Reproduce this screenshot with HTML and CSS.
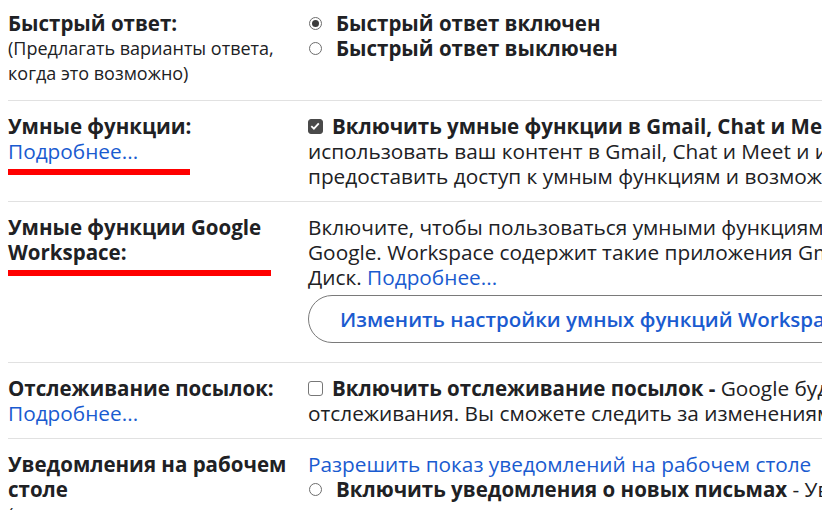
FILE: index.html
```html
<!DOCTYPE html>
<html lang="ru">
<head>
<meta charset="utf-8">
<link rel="stylesheet" href="styles.css">
</head>
<body>
<div class="settings">
  <div class="row row-first">
    <div class="label">
      <div class="title">Быстрый ответ:</div>
      <div class="sub">(Предлагать варианты ответа,<br>когда это возможно)</div>
    </div>
    <div class="value">
      <div class="opt"><span class="radio on"></span><b>Быстрый ответ включен</b></div>
      <div class="opt"><span class="radio"></span><b>Быстрый ответ выключен</b></div>
    </div>
  </div>

  <div class="row">
    <div class="label">
      <div class="title">Умные функции:</div>
      <a class="link">Подробнее...</a>
      <div class="mark mark-short"></div>
    </div>
    <div class="value">
      <div class="opt"><span class="check on"><svg viewBox="0 0 14 14" width="14" height="14"><path d="M3.3 7.2 L5.9 9.7 L10.8 4.3" fill="none" stroke="#fff" stroke-width="1.8"/></svg></span><b>Включить умные функции в Gmail, Chat и Meet</b></div>
      <div class="line">использовать ваш контент в Gmail, Chat и Meet и информацию</div>
      <div class="line">предоставить доступ к умным функциям и возможностям</div>
    </div>
  </div>

  <div class="row row-ws">
    <div class="label">
      <div class="title">Умные функции Google<br>Workspace:</div>
      <div class="mark mark-long"></div>
    </div>
    <div class="value">
      <div class="line">Включите, чтобы пользоваться умными функциями и</div>
      <div class="line">Google. Workspace содержит такие приложения Gmail,</div>
      <div class="line">Диск. <a class="link">Подробнее...</a></div>
      <button class="pill">Изменить настройки умных функций Workspace</button>
    </div>
  </div>

  <div class="row">
    <div class="label">
      <div class="title">Отслеживание посылок:</div>
      <a class="link">Подробнее...</a>
    </div>
    <div class="value">
      <div class="opt"><span class="check"></span><b>Включить отслеживание посылок -</b>&nbsp;Google будет</div>
      <div class="line">отслеживания. Вы сможете следить за изменениями</div>
    </div>
  </div>

  <div class="row row-last">
    <div class="label">
      <div class="title">Уведомления на рабочем<br>столе</div>
      <div class="sub">(разрешить показ</div>
    </div>
    <div class="value">
      <a class="link">Разрешить показ уведомлений на рабочем столе</a>
      <div class="opt"><span class="radio"></span><b>Включить уведомления о новых письмах</b>&nbsp;- Уведомлять</div>
    </div>
  </div>
</div>
</body>
</html>
```

FILE: styles.css
```css
html, body {
  margin: 0;
  padding: 0;
  background: #fff;
  overflow: hidden;
}
body {
  width: 822px;
  height: 510px;
  font-family: "Open Sans", Roboto, Arial, sans-serif;
  color: #202124;
  font-size: 20.8px;
  line-height: 25px;
}
.settings {
  padding-left: 8px;
  margin-top: -3px;
}
.row {
  display: grid;
  grid-template-columns: 300px 514px;
  border-bottom: 1px solid #e1e1e1;
  padding: 13px 0 12px;
}
.row-first {
  padding: 14px 0 14px;
}
.row-ws {
  padding-bottom: 19px;
}
.row-last {
  border-bottom: none;
}
.label {
  display: flex;
  flex-direction: column;
  align-items: flex-start;
}
.title {
  font-weight: 700;
  font-size: 20.5px;
}
.sub {
  font-size: 18px;
}
.link {
  color: #1a5bd0;
  text-decoration: none;
}
.mark {
  height: 6px;
  background: #ff0000;
  margin-top: 5px;
}
.mark-short { width: 182px; }
.mark-long { width: 263px; }
.value {
  white-space: nowrap;
}
.opt {
  display: flex;
  align-items: center;
}
.opt b {
  font-weight: 700;
  font-size: 20.5px;
}
.radio {
  width: 11px;
  height: 11px;
  border: 1px solid #6d6d6d;
  border-radius: 50%;
  margin: 0 14px 0 1px;
  flex: none;
  position: relative;
}
.radio.on::after {
  content: "";
  position: absolute;
  left: 2px;
  top: 2px;
  width: 7px;
  height: 7px;
  border-radius: 50%;
  background: #3c3c3c;
}
.check {
  width: 13px;
  height: 13px;
  border: 1px solid #777;
  border-radius: 3px;
  margin: 0 9px 0 0;
  flex: none;
  display: flex;
}
.check.on {
  background: #4a4a4a;
  border-color: #4a4a4a;
}
.check svg { display: block; margin: -1px; }
.pill {
  display: block;
  margin-top: 5px;
  height: 48px;
  width: 600px;
  border: 1px solid #7a7a7a;
  border-radius: 24px;
  background: #fff;
  color: #1a5bd0;
  font-family: "Open Sans", Roboto, Arial, sans-serif;
  font-size: 20.5px;
  font-weight: 600;
  text-align: left;
  padding: 0 0 0 31px;
  white-space: nowrap;
}
```
